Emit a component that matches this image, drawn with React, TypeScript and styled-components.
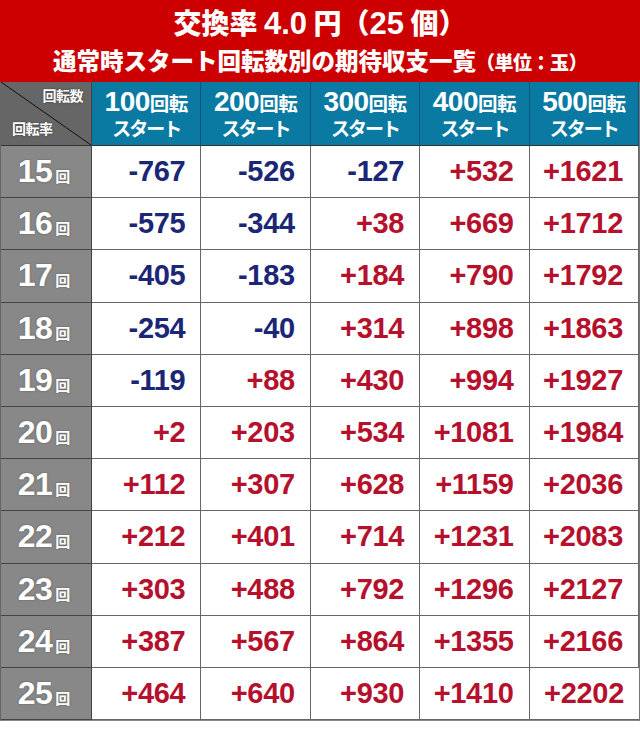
import styled, { createGlobalStyle } from "styled-components";

const GlobalStyle = createGlobalStyle`
  body {
    margin: 0;
    background: #fff;
    font-family: "Liberation Sans", "Noto Sans CJK JP", sans-serif;
  }
`;

const rates = [15, 16, 17, 18, 19, 20, 21, 22, 23, 24, 25];
const spins = [100, 200, 300, 400, 500];
const values = [
  [-767, -526, -127, 532, 1621],
  [-575, -344, 38, 669, 1712],
  [-405, -183, 184, 790, 1792],
  [-254, -40, 314, 898, 1863],
  [-119, 88, 430, 994, 1927],
  [2, 203, 534, 1081, 1984],
  [112, 307, 628, 1159, 2036],
  [212, 401, 714, 1231, 2083],
  [303, 488, 792, 1296, 2127],
  [387, 567, 864, 1355, 2166],
  [464, 640, 930, 1410, 2202],
];

const Wrap = styled.div`
  width: 640px;
  height: 731px;
  background: #fff;
`;

const Title = styled.header`
  height: 82px;
  background: #cc0000;
  color: #fff;
  display: flex;
  flex-direction: column;
  align-items: center;
  justify-content: flex-start;
  font-family: "Noto Sans CJK JP", sans-serif;
  font-weight: 900;
  box-sizing: border-box;
  padding-top: 2px;
`;

const Main = styled.div`
  font-size: 28px;
  line-height: 41px;
  span {
    font-family: "Liberation Sans", "Noto Sans CJK JP", sans-serif;
    font-weight: 700;
    font-size: 31px;
  }
`;

const Sub = styled.div`
  font-size: 23.5px;
  line-height: 34px;
  margin-top: -1px;
  small {
    font-size: 19px;
    letter-spacing: -0.5px;
  }
`;

const Grid = styled.div`
  display: grid;
  grid-template-columns: 91px repeat(5, 1fr);
  grid-template-rows: 64px repeat(11, 52.2px);
  width: 640px;
  box-sizing: border-box;
  border-right: 1px solid #777;
  border-bottom: 1px solid #888;
  border-left: 1px solid #666;
`;

const Corner = styled.div`
  position: relative;
  background: #666;
  border-right: 1px solid #444;
  border-bottom: 1px solid #333;
  color: #fff;
  font-family: "Noto Sans CJK JP", sans-serif;
  font-weight: 700;
  font-size: 14px;
  overflow: hidden;
`;

const CornerLine = styled.svg`
  position: absolute;
  inset: 0;
  width: 100%;
  height: 100%;
`;

const CornerLabel = styled.span<{ $bottom?: boolean }>`
  position: absolute;
  letter-spacing: -0.5px;
  ${(p) => (p.$bottom ? "left: 11px; bottom: 7px;" : "right: 8px; top: 3px;")}
  text-shadow: 0 0 2px #333;
`;

const HeadCell = styled.div`
  background: #0a7aa2;
  border-right: 1px solid #08577a;
  border-bottom: 1px solid #333;
  color: #fff;
  display: flex;
  flex-direction: column;
  align-items: center;
  justify-content: center;
  font-family: "Noto Sans CJK JP", sans-serif;
  font-weight: 700;
  font-size: 19.5px;
  line-height: 25px;
  padding-top: 1px;
  &:last-of-type {
    border-right: none;
  }
`;

const HeadTop = styled.div`
  letter-spacing: -0.5px;
`;

const HeadBottom = styled.div`
  letter-spacing: -2px;
  font-size: 19px;
`;

const Num = styled.span`
  font-family: "Liberation Sans", sans-serif;
  font-size: 28px;
  letter-spacing: -0.5px;
`;

const RateCell = styled.div`
  background: #888;
  border-right: 1px solid #444;
  border-bottom: 1px solid #444;
  color: #fff;
  display: flex;
  align-items: baseline;
  justify-content: center;
  padding-top: 5px;
  padding-right: 4px;
  box-sizing: border-box;
  font-weight: 700;
  text-shadow: 0 0 2px #555;
`;

const RateNum = styled.span`
  font-size: 32px;
  line-height: 40px;
  letter-spacing: -0.5px;
`;

const RateUnit = styled.span`
  font-family: "Noto Sans CJK JP", sans-serif;
  font-size: 15px;
  margin-left: 3px;
`;

const ValueCell = styled.div<{ $neg: boolean }>`
  border-right: 1px solid #666;
  border-bottom: 1px solid #666;
  display: flex;
  align-items: center;
  justify-content: flex-end;
  padding-right: 15px;
  color: ${(p) => (p.$neg ? "#1b2677" : "#b5112d")};
  font-weight: 700;
  font-size: 29px;
  letter-spacing: -0.3px;
  &:last-child {
    border-right: none;
  }
`;

const fmt = (v: number) => (v < 0 ? `-${-v}` : `+${v}`);

export default function App() {
  return (
    <Wrap>
      <GlobalStyle />
      <Title>
        <Main>
          交換率 <span>4.0</span> 円（<span>25</span> 個）
        </Main>
        <Sub>
          通常時スタート回転数別の期待収支一覧<small>（単位：玉）</small>
        </Sub>
      </Title>
      <Grid>
        <Corner>
          <CornerLine viewBox="0 0 90 63" preserveAspectRatio="none">
            <line x1="0" y1="0" x2="90" y2="63" stroke="#111" strokeWidth="1" />
          </CornerLine>
          <CornerLabel>回転数</CornerLabel>
          <CornerLabel $bottom>回転率</CornerLabel>
        </Corner>
        {spins.map((s) => (
          <HeadCell key={s}>
            <HeadTop>
              <Num>{s}</Num>回転
            </HeadTop>
            <HeadBottom>スタート</HeadBottom>
          </HeadCell>
        ))}
        {rates.map((r, i) => [
          <RateCell key={`r${r}`}>
            <RateNum>{r}</RateNum>
            <RateUnit>回</RateUnit>
          </RateCell>,
          ...values[i].map((v, j) => (
            <ValueCell key={`${r}-${j}`} $neg={v < 0}>
              {fmt(v)}
            </ValueCell>
          )),
        ])}
      </Grid>
    </Wrap>
  );
}
